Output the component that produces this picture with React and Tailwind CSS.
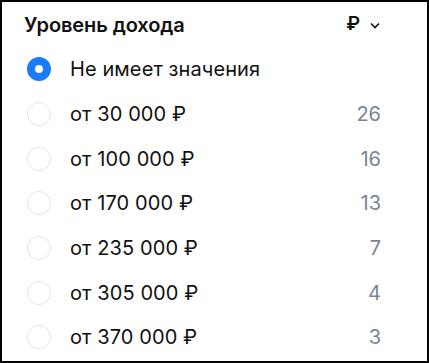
import React from "react";

const rows = [
  ["от 30 000 ₽", "26"],
  ["от 100 000 ₽", "16"],
  ["от 170 000 ₽", "13"],
  ["от 235 000 ₽", "7"],
  ["от 305 000 ₽", "4"],
  ["от 370 000 ₽", "3"],
];

export default function App() {
  return (
    <div className="w-[429px] h-[363px] border-2 border-black bg-white overflow-hidden" style={{ fontFamily: "Inter, 'Noto Sans', sans-serif" }}>
      <div className="flex items-center justify-between pl-[22px] pr-[46px] h-[45px]">
        <div className="text-[20px] font-semibold text-[#111] tracking-[-0.1px]">Уровень дохода</div>
        <div className="flex items-center gap-[9px]">
          <span className="text-[19px] font-semibold text-[#111]">₽</span>
          <svg width="12" height="12" viewBox="0 0 12 12" fill="none">
            <path d="M2 4.5 L6 8.5 L10 4.5" stroke="#111" strokeWidth="1.6" />
          </svg>
        </div>
      </div>
      <div className="flex items-center h-[44.7px] pl-[25px] pr-[46px]">
        <div className="w-[24px] h-[24px] rounded-full border-[8px] border-[#1a7bff] shrink-0" />
        <span className="ml-[19px] text-[20px] text-[#111] tracking-[0.1px]">Не имеет значения</span>
      </div>
      {rows.map(([label, n]) => (
        <div key={label} className="flex items-center h-[44.7px] pl-[25px] pr-[46px]">
          <div className="w-[24px] h-[24px] rounded-full border border-[#dfe3ea] shrink-0" />
          <span className="ml-[19px] text-[20px] text-[#111] flex-1 tracking-[0.1px]">{label}</span>
          <span className="text-[20px] text-[#7a8594]">{n}</span>
        </div>
      ))}
    </div>
  );
}
